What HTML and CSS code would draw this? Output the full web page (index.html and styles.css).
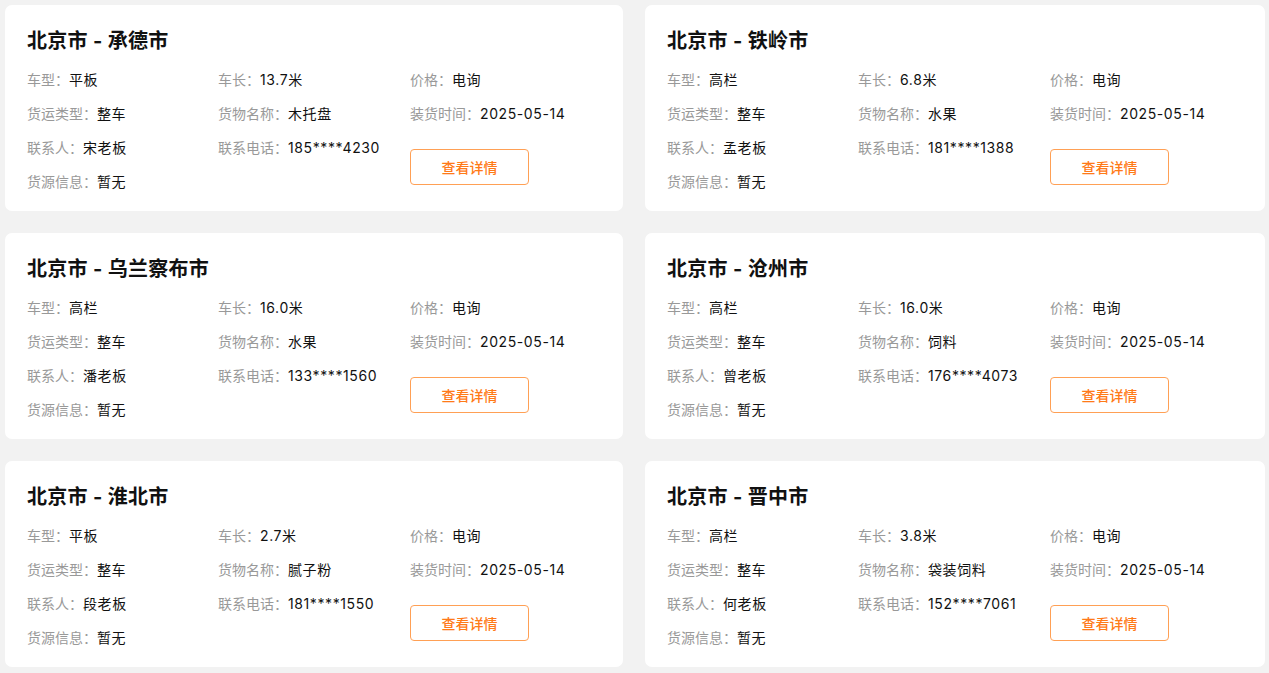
FILE: index.html
```html
<!DOCTYPE html>
<html lang="zh">
<head>
<meta charset="utf-8">
<link rel="stylesheet" href="styles.css">
</head>
<body>
<div class="list">
  <div class="card">
    <div class="title">北京市 - 承德市</div>
    <div class="fields">
      <div class="f"><span class="l">车型：</span><span class="v">平板</span></div>
      <div class="f"><span class="l">车长：</span><span class="v">13.7米</span></div>
      <div class="f"><span class="l">价格：</span><span class="v">电询</span></div>
      <div class="f"><span class="l">货运类型：</span><span class="v">整车</span></div>
      <div class="f"><span class="l">货物名称：</span><span class="v">木托盘</span></div>
      <div class="f"><span class="l">装货时间：</span><span class="v">2025-05-14</span></div>
      <div class="f"><span class="l">联系人：</span><span class="v">宋老板</span></div>
      <div class="f"><span class="l">联系电话：</span><span class="v">185****4230</span></div>
      <button class="btn">查看详情</button>
      <div class="f"><span class="l">货源信息：</span><span class="v">暂无</span></div>
    </div>
  </div>
  <div class="card">
    <div class="title">北京市 - 铁岭市</div>
    <div class="fields">
      <div class="f"><span class="l">车型：</span><span class="v">高栏</span></div>
      <div class="f"><span class="l">车长：</span><span class="v">6.8米</span></div>
      <div class="f"><span class="l">价格：</span><span class="v">电询</span></div>
      <div class="f"><span class="l">货运类型：</span><span class="v">整车</span></div>
      <div class="f"><span class="l">货物名称：</span><span class="v">水果</span></div>
      <div class="f"><span class="l">装货时间：</span><span class="v">2025-05-14</span></div>
      <div class="f"><span class="l">联系人：</span><span class="v">孟老板</span></div>
      <div class="f"><span class="l">联系电话：</span><span class="v">181****1388</span></div>
      <button class="btn">查看详情</button>
      <div class="f"><span class="l">货源信息：</span><span class="v">暂无</span></div>
    </div>
  </div>
  <div class="card">
    <div class="title">北京市 - 乌兰察布市</div>
    <div class="fields">
      <div class="f"><span class="l">车型：</span><span class="v">高栏</span></div>
      <div class="f"><span class="l">车长：</span><span class="v">16.0米</span></div>
      <div class="f"><span class="l">价格：</span><span class="v">电询</span></div>
      <div class="f"><span class="l">货运类型：</span><span class="v">整车</span></div>
      <div class="f"><span class="l">货物名称：</span><span class="v">水果</span></div>
      <div class="f"><span class="l">装货时间：</span><span class="v">2025-05-14</span></div>
      <div class="f"><span class="l">联系人：</span><span class="v">潘老板</span></div>
      <div class="f"><span class="l">联系电话：</span><span class="v">133****1560</span></div>
      <button class="btn">查看详情</button>
      <div class="f"><span class="l">货源信息：</span><span class="v">暂无</span></div>
    </div>
  </div>
  <div class="card">
    <div class="title">北京市 - 沧州市</div>
    <div class="fields">
      <div class="f"><span class="l">车型：</span><span class="v">高栏</span></div>
      <div class="f"><span class="l">车长：</span><span class="v">16.0米</span></div>
      <div class="f"><span class="l">价格：</span><span class="v">电询</span></div>
      <div class="f"><span class="l">货运类型：</span><span class="v">整车</span></div>
      <div class="f"><span class="l">货物名称：</span><span class="v">饲料</span></div>
      <div class="f"><span class="l">装货时间：</span><span class="v">2025-05-14</span></div>
      <div class="f"><span class="l">联系人：</span><span class="v">曾老板</span></div>
      <div class="f"><span class="l">联系电话：</span><span class="v">176****4073</span></div>
      <button class="btn">查看详情</button>
      <div class="f"><span class="l">货源信息：</span><span class="v">暂无</span></div>
    </div>
  </div>
  <div class="card">
    <div class="title">北京市 - 淮北市</div>
    <div class="fields">
      <div class="f"><span class="l">车型：</span><span class="v">平板</span></div>
      <div class="f"><span class="l">车长：</span><span class="v">2.7米</span></div>
      <div class="f"><span class="l">价格：</span><span class="v">电询</span></div>
      <div class="f"><span class="l">货运类型：</span><span class="v">整车</span></div>
      <div class="f"><span class="l">货物名称：</span><span class="v">腻子粉</span></div>
      <div class="f"><span class="l">装货时间：</span><span class="v">2025-05-14</span></div>
      <div class="f"><span class="l">联系人：</span><span class="v">段老板</span></div>
      <div class="f"><span class="l">联系电话：</span><span class="v">181****1550</span></div>
      <button class="btn">查看详情</button>
      <div class="f"><span class="l">货源信息：</span><span class="v">暂无</span></div>
    </div>
  </div>
  <div class="card">
    <div class="title">北京市 - 晋中市</div>
    <div class="fields">
      <div class="f"><span class="l">车型：</span><span class="v">高栏</span></div>
      <div class="f"><span class="l">车长：</span><span class="v">3.8米</span></div>
      <div class="f"><span class="l">价格：</span><span class="v">电询</span></div>
      <div class="f"><span class="l">货运类型：</span><span class="v">整车</span></div>
      <div class="f"><span class="l">货物名称：</span><span class="v">袋装饲料</span></div>
      <div class="f"><span class="l">装货时间：</span><span class="v">2025-05-14</span></div>
      <div class="f"><span class="l">联系人：</span><span class="v">何老板</span></div>
      <div class="f"><span class="l">联系电话：</span><span class="v">152****7061</span></div>
      <button class="btn">查看详情</button>
      <div class="f"><span class="l">货源信息：</span><span class="v">暂无</span></div>
    </div>
  </div>
</div>
</body>
</html>
```

FILE: styles.css
```css
html, body {
  margin: 0;
  padding: 0;
  background: #f2f2f2;
}
body {
  font-family: "Inter", "Noto Sans CJK SC", sans-serif;
  color: #111;
  overflow: hidden;
}
.list {
  display: grid;
  grid-template-columns: 618px 620px;
  column-gap: 22px;
  row-gap: 22px;
  padding: 5px 4px 0 5px;
}
.card {
  background: #fff;
  border-radius: 7px;
  padding: 21px 22px 19px 22px;
  height: 206px;
  box-sizing: border-box;
}
.title {
  font-size: 20px;
  font-weight: bold;
  line-height: 30px;
  color: #111;
  margin-bottom: 14px;
  letter-spacing: 0.3px;
}
.fields {
  display: grid;
  grid-template-columns: 191px 192px 1fr;
  grid-auto-rows: 20px;
  row-gap: 14px;
  font-size: 14px;
  line-height: 20px;
}
.f {
  white-space: nowrap;
}
.l {
  color: #999;
}
.v {
  color: #111;
  letter-spacing: 0.6px;
}
.btn {
  grid-column: 3;
  grid-row: 3 / 5;
  align-self: center;
  justify-self: start;
  margin-top: 3px;
  width: 119px;
  height: 36px;
  box-sizing: border-box;
  border: 1px solid #ffa055;
  border-radius: 4px;
  background: #fff;
  color: #ff7a18;
  font-family: "Inter", "Noto Sans CJK SC", sans-serif;
  font-size: 14px;
  font-weight: 500;
  padding: 0;
}
```
